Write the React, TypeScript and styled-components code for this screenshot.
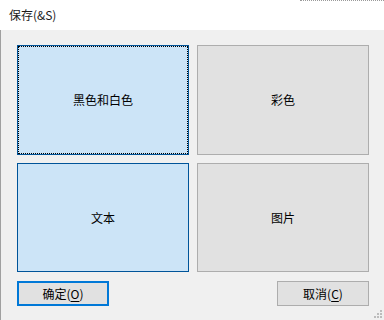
import styled, { createGlobalStyle } from 'styled-components';

const GlobalStyle = createGlobalStyle`
  html, body {
    margin: 0;
    padding: 0;
    background: #f0f0f0;
  }
  * {
    box-sizing: border-box;
  }
`;

const OPTIONS = [
  { title: '黑色和白色', selected: true, focused: true },
  { title: '彩色', selected: false, focused: false },
  { title: '文本', selected: true, focused: false },
  { title: '图片', selected: false, focused: false },
];

const App = () => {
  return (
    <>
      <GlobalStyle />
      <Dialog>
        <TitleBar>保存(&amp;S)</TitleBar>
        <Body>
          <Grid>
            {OPTIONS.map(item => (
              <Tile key={item.title} $selected={item.selected} $focused={item.focused}>
                {item.title}
              </Tile>
            ))}
          </Grid>
          <Footer>
            <Button $primary>确定(<u>O</u>)</Button>
            <Button>取消(<u>C</u>)</Button>
          </Footer>
          <Grip width="8" height="8" viewBox="0 0 8 8">
            <rect x="6" y="0" width="2" height="2" fill="#bcbcbc" />
            <rect x="3" y="3" width="2" height="2" fill="#bcbcbc" />
            <rect x="6" y="3" width="2" height="2" fill="#bcbcbc" />
            <rect x="0" y="6" width="2" height="2" fill="#bcbcbc" />
            <rect x="3" y="6" width="2" height="2" fill="#bcbcbc" />
            <rect x="6" y="6" width="2" height="2" fill="#bcbcbc" />
          </Grip>
        </Body>
      </Dialog>
    </>
  );
};

export default App;

const Dialog = styled.div`
  width: 384px;
  height: 320px;
  display: flex;
  flex-direction: column;
  font-family: 'Noto Sans CJK SC', 'Liberation Sans', sans-serif;
  font-size: 12px;
  color: #000;
`;

const TitleBar = styled.div`
  position: relative;
  height: 30px;
  flex-shrink: 0;
  display: flex;
  align-items: center;
  padding: 0 0 1px 9px;
  background: #fff;
  color: #1a1a1a;

  &::after {
    content: '';
    position: absolute;
    top: 0;
    right: 0;
    width: 84px;
    border-top: 1px dotted #9a9a9a;
  }
`;

const Body = styled.div`
  position: relative;
  flex: 1;
  display: flex;
  flex-direction: column;
  padding: 15px 15px 0 17px;
  background: #f0f0f0;
  border-left: 1px solid #a0a0a0;
`;

const Grid = styled.div`
  display: grid;
  grid-template-columns: 172px 172px;
  grid-template-rows: 110px 109px;
  column-gap: 8px;
  row-gap: 8px;
  margin-left: -1px;
`;

const Tile = styled.div<{ $selected: boolean; $focused: boolean }>`
  position: relative;
  display: flex;
  align-items: center;
  justify-content: center;
  padding-bottom: 1px;
  background: ${p => (p.$selected ? '#cce4f7' : '#e1e1e1')};
  border: 1px solid ${p => (p.$selected ? '#005499' : '#adadad')};

  &::after {
    content: '';
    display: ${p => (p.$focused ? 'block' : 'none')};
    position: absolute;
    inset: 0;
    border: 1px dotted #000;
  }
`;

const Footer = styled.div`
  display: flex;
  justify-content: space-between;
  margin: 9px 0 0 -1px;
`;

const Button = styled.button<{ $primary?: boolean }>`
  width: 92px;
  height: 25px;
  display: flex;
  align-items: center;
  justify-content: center;
  padding: 0;
  font-family: inherit;
  font-size: 12px;
  color: #000;
  background: #e1e1e1;
  border: ${p => (p.$primary ? '2px solid #0078d7' : '1px solid #adadad')};
  border-radius: 0;

  u {
    text-decoration: underline;
    text-underline-offset: 2px;
  }
`;

const Grip = styled.svg`
  position: absolute;
  right: 2px;
  bottom: 2px;
`;
